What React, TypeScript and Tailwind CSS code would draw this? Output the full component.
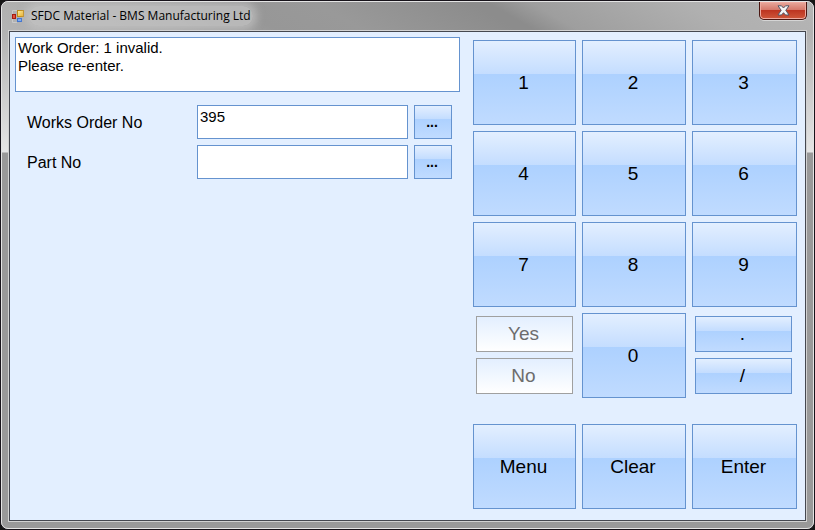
import type { ReactNode } from "react";

const face =
  "border border-[#6593cf] bg-[linear-gradient(to_bottom,#e3efff_0%,#c4ddff_40%,#add1ff_40%,#c0dbff_100%)] text-black active:brightness-95";

function Key({ children }: { children: ReactNode }) {
  return (
    <button type="button" className={`h-[85px] w-full pr-0.5 text-[19px] leading-6 ${face}`}>
      {children}
    </button>
  );
}

function SmallKey({ children, disabled = false }: { children: ReactNode; disabled?: boolean }) {
  return (
    <button
      type="button"
      disabled={disabled}
      className={`h-9 w-full pr-0.5 text-[19px] leading-6 ${
        disabled
          ? "border border-[#a0a0a0] bg-linear-to-b from-[#e3efff] to-white text-[#6d6d6d]"
          : face
      }`}
    >
      {children}
    </button>
  );
}

function Field({ id, label, value }: { id: string; label: string; value: string }) {
  return (
    <div className="flex items-center gap-1.5">
      <label htmlFor={id} className="w-[164px] shrink-0 pt-0.5 text-base">
        {label}
      </label>
      <input
        id={id}
        type="text"
        defaultValue={value}
        className="h-[34px] min-w-0 flex-1 border border-[#6593cf] bg-white px-0.5 pb-3 text-[15px] leading-5 outline-none"
      />
      <button
        type="button"
        aria-label={`Look up ${label}`}
        className={`h-[34px] w-[38px] shrink-0 pr-0.5 text-sm font-bold ${face}`}
      >
        ...
      </button>
    </div>
  );
}

function AppIcon() {
  return (
    <svg width="13" height="13" viewBox="0 0 13 13" className="mt-2 shrink-0" aria-hidden="true">
      <defs>
        <linearGradient id="gold" x1="0" y1="0" x2="1" y2="1">
          <stop offset="0" stopColor="#fff3a8" />
          <stop offset="1" stopColor="#efad16" />
        </linearGradient>
      </defs>
      <path d="M0.5 4V0.5H5M0.5 9v3.500H5" fill="none" stroke="#c9c9c9" />
      <rect x="5.500" y="0.500" width="6" height="6" fill="url(#gold)" stroke="#c18a13" />
      <rect x="0.500" y="4.500" width="3" height="4" fill="#e2523a" stroke="#a51b13" />
      <rect x="5.500" y="8.500" width="4" height="3" fill="#79aaf5" stroke="#3d72d0" />
    </svg>
  );
}

export default function App() {
  return (
    <div className="min-h-screen bg-[#151515] font-['Liberation_Sans',Arial,sans-serif] text-black">
      <div className="flex min-h-screen flex-col rounded-lg border border-[#17131a] bg-[#999]">
        <div className="flex flex-1 flex-col rounded-[7px] border border-[#e4e4e4] bg-[linear-gradient(to_bottom,#b2b2b2_0px,#b2b2b2_30px,#e5e5e5_150px,#999_151px,#999_100%)] px-1.5 pb-1.5">
          <header className="-mx-1.5 flex h-7 shrink-0 items-start gap-1 overflow-hidden rounded-t-[6px] bg-[linear-gradient(30deg,#b4b4b4_0%,#a6a6a6_20%,#979797_32%,#999_42%,#8c8c8c_60%,#8c8c8c_62%,#9e9e9e_67%,#b0b0b0_85%,#b5b5b5_100%)] pr-1.5 pl-2.5">
            <AppIcon />
            <h1 className="flex min-w-0 flex-1 pt-1 font-['Open_Sans','Noto_Sans',sans-serif] text-[12px] leading-5">
              <span className="truncate rounded-full bg-[#c4c4c4]/70 px-0.5 [box-shadow:0_0_8px_4px_#c4c4c4b3]">
                SFDC Material - BMS Manufacturing Ltd
              </span>
            </h1>
            <button
              type="button"
              aria-label="Close"
              className="flex h-[18px] w-12 shrink-0 items-center justify-center rounded-b-[5px] border border-t-0 border-[#4b1712] bg-[linear-gradient(to_bottom,#e9a99d_0%,#d6796b_45%,#bd3521_50%,#cf583b_100%)] [box-shadow:inset_0_0_0_1px_#eeaaa0,0_1px_0_#d5d5d5]"
            >
              <svg width="13" height="11" viewBox="0 0 13 11" aria-hidden="true">
                <path
                  d="M1 .8h3.500l2 2.200 2-2.200H12L8.800 5.300 12 10H8.500l-2-2.300-2 2.300H1l3.200-4.700Z"
                  fill="#f5f5f5"
                  stroke="#535666"
                  strokeWidth="1"
                />
              </svg>
            </button>
          </header>

          <div className="flex flex-1 flex-col border border-[#d2d2d2]">
            <main className="flex flex-1 items-start gap-[13px] border border-[#454850] bg-[#e3efff] pt-[5px] pr-2 pb-2.5 pl-[5px]">
              <section className="min-w-0 flex-1">
                <div
                  role="status"
                  className="h-[55px] border border-[#6593cf] bg-white px-0.5 pt-px text-[15px] leading-[18px]"
                >
                  <p>Work Order: 1 invalid.</p>
                  <p>Please re-enter.</p>
                </div>
                <form className="mt-[13px] flex flex-col gap-1.5 pr-2 pl-3">
                  <Field id="works-order" label="Works Order No" value="395" />
                  <Field id="part" label="Part No" value="" />
                </form>
              </section>

              <section className="w-[324px] shrink-0 pt-[3px]">
                <div className="grid grid-cols-[103px_104px_105px] gap-1.5">
                  <Key>1</Key>
                  <Key>2</Key>
                  <Key>3</Key>
                  <Key>4</Key>
                  <Key>5</Key>
                  <Key>6</Key>
                  <Key>7</Key>
                  <Key>8</Key>
                  <Key>9</Key>
                  <div className="flex flex-col gap-1.5 px-[3px] pt-[3px]">
                    <SmallKey disabled>Yes</SmallKey>
                    <SmallKey disabled>No</SmallKey>
                  </div>
                  <Key>0</Key>
                  <div className="flex flex-col gap-1.5 pt-[3px] pr-[5px] pl-[3px]">
                    <SmallKey>.</SmallKey>
                    <SmallKey>/</SmallKey>
                  </div>
                </div>
                <div className="mt-[26px] grid grid-cols-[103px_104px_105px] gap-1.5">
                  <Key>Menu</Key>
                  <Key>Clear</Key>
                  <Key>Enter</Key>
                </div>
              </section>
            </main>
          </div>
        </div>
      </div>
    </div>
  );
}
